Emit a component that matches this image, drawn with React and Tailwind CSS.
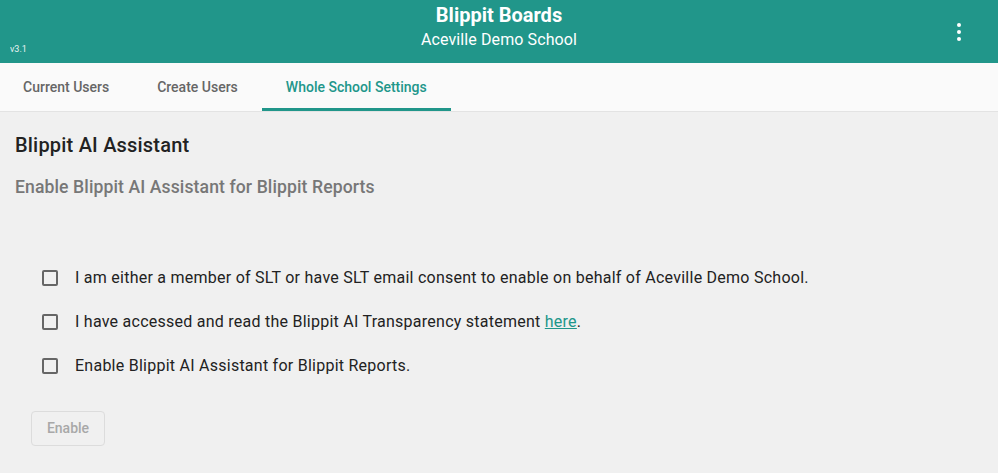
import { useState } from "react";

const items = [
  { id: "slt", label: "I am either a member of SLT or have SLT email consent to enable on behalf of Aceville Demo School." },
  { id: "read", label: "I have accessed and read the Blippit AI Transparency statement ", link: "here" },
  { id: "enable", label: "Enable Blippit AI Assistant for Blippit Reports." },
];

export default function App() {
  const [checked, setChecked] = useState({});
  const [tab, setTab] = useState(2);
  const tabs = ["Current Users", "Create Users", "Whole School Settings"];

  return (
    <div className="w-full min-h-screen bg-[#f0f0f0] font-['Roboto',sans-serif]">
      {/* Header */}
      <div className="relative h-[63px] bg-[#21968a] text-white flex flex-col items-center">
        <div className="text-[20px] font-bold leading-[24px] mt-[3px]">Blippit Boards</div>
        <div className="text-[16px] leading-[20px] mt-[3px] tracking-[0.1px]">Aceville Demo School</div>
        <span className="absolute left-[10px] top-[43px] text-[9px] opacity-90">v3.1</span>
        <button className="absolute right-[37px] top-[23px] flex flex-col gap-[3px]">
          <span className="w-[4px] h-[4px] rounded-full bg-white" />
          <span className="w-[4px] h-[4px] rounded-full bg-white" />
          <span className="w-[4px] h-[4px] rounded-full bg-white" />
        </button>
      </div>

      {/* Tabs */}
      <div className="flex h-[49px] bg-[#fafafa] border-b border-[#e3e3e3]">
        {tabs.map((t, i) => (
          <button
            key={t}
            onClick={() => setTab(i)}
            className={`px-[24px] first:pl-[23px] pt-[4px] text-[14px] font-medium border-b-[3px] ${
              tab === i ? "text-[#21968a] border-[#21968a]" : "text-[#666] border-transparent"
            }`}
          >
            {t}
          </button>
        ))}
      </div>

      {/* Content */}
      <div className="px-[15px] pt-[21px]">
        <h2 className="text-[20px] font-medium text-[#222] leading-[24px] tracking-[0.2px]">Blippit AI Assistant</h2>
        <h3 className="mt-[19px] text-[17.6px] font-medium text-[#777] leading-[22px] tracking-[0.1px]">
          Enable Blippit AI Assistant for Blippit Reports
        </h3>

        <div className="mt-[70px] pl-[27px] flex flex-col gap-[24px]">
          {items.map((it) => (
            <label key={it.id} className="flex items-center gap-[17px] h-[20px] cursor-pointer">
              <span
                onClick={() => setChecked({ ...checked, [it.id]: !checked[it.id] })}
                className="w-[16px] h-[16px] border-2 border-[#666] rounded-[2px] bg-transparent"
              />
              <span className="text-[16px] text-[#222] tracking-[0.25px]">
                {it.label}
                {it.link && (
                  <>
                    <a href="#" className="text-[#21968a] underline">{it.link}</a>.
                  </>
                )}
              </span>
            </label>
          ))}
        </div>

        <button
          disabled
          className="mt-[35px] ml-[16px] h-[35px] w-[74px] border border-[#dcdcdc] rounded-[4px] text-[14px] font-medium text-[#a8a8a8]"
        >
          Enable
        </button>
      </div>
    </div>
  );
}
